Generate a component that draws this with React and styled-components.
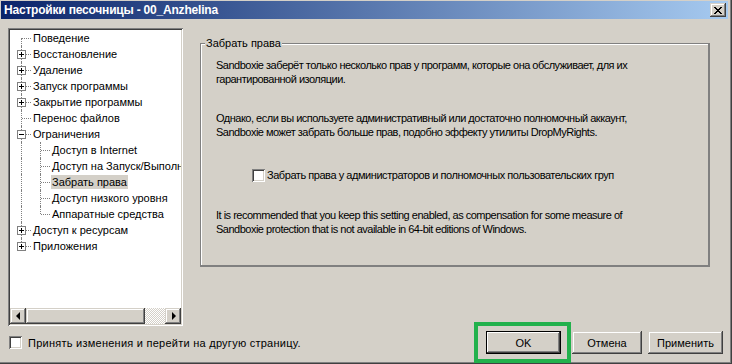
import React from 'react'
import styled, { createGlobalStyle } from 'styled-components'

const FONT = `"Liberation Sans", Arial, sans-serif`

const GlobalStyle = createGlobalStyle`
    body {
        margin: 0;
        background: #d4d0c8;
        font-family: ${FONT};
        font-size: 11px;
        color: #000;
    }
`

const raised = `
    box-shadow: inset -1px -1px #404040, inset 1px 1px #d4d0c8, inset -2px -2px #808080, inset 2px 2px #fff;
`
const sunken = `
    box-shadow: inset 1px 1px #808080, inset -1px -1px #fff, inset 2px 2px #404040, inset -2px -2px #d4d0c8;
`

const Window = styled.div`
    width: 732px;
    height: 364px;
    box-sizing: border-box;
    padding: 1px 4px 3px 1px;
    background: #d4d0c8;
    box-shadow: inset -1px -1px #404040, inset -2px -2px #808080, inset 1px 1px #d4d0c8;
    display: flex;
    flex-direction: column;
`
const TitleBar = styled.div`
    height: 18px;
    flex: none;
    display: flex;
    align-items: center;
    justify-content: space-between;
    padding: 0 2px 0 3px;
    background: linear-gradient(to right, #0a246a, #a6caf0);
    color: #fff;
    font-weight: bold;
    font-size: 12px;
    letter-spacing: -0.2px;
`
const CloseButton = styled.div`
    width: 16px;
    height: 14px;
    background: #d4d0c8;
    ${raised}
    display: flex;
    align-items: center;
    justify-content: center;
`
const Body = styled.div`
    flex: 1;
    display: grid;
    grid-template-columns: 175px 1fr;
    grid-template-rows: 298px 1fr;
    column-gap: 17px;
    padding: 9px 5px 0 7px;
`
const TreePanel = styled.div`
    background: #fff;
    ${sunken}
    padding: 2px;
    display: flex;
    flex-direction: column;
    overflow: hidden;
`
const TreeList = styled.div`
    flex: 1;
    padding-left: 2px;
    overflow: hidden;
`
const Row = styled.div`
    height: 16px;
    display: flex;
    align-items: center;
    white-space: nowrap;
`
const Cell = styled.span`
    position: relative;
    width: 19px;
    height: 16px;
    flex: none;
    &::before {
        content: '';
        display: ${p => (p.$kind === 'blank' ? 'none' : 'block')};
        position: absolute;
        left: 9px;
        top: ${p => (p.$kind === 'first' ? 8 : 0)}px;
        height: ${p => (p.$kind === 'first' || p.$kind === 'last' ? 8 : 16)}px;
        border-left: 1px dotted #808080;
    }
    &::after {
        content: '';
        display: ${p => (p.$kind === 'blank' || p.$kind === 'pipe' ? 'none' : 'block')};
        position: absolute;
        left: 10px;
        top: 8px;
        width: 9px;
        border-top: 1px dotted #808080;
    }
`
const Expander = styled.svg`
    position: absolute;
    left: 5px;
    top: 4px;
    z-index: 1;
`
const Label = styled.span`
    height: 14px;
    line-height: 14px;
    padding: 0 1px;
    margin-left: 1px;
    background: ${p => (p.$selected ? '#d4d0c8' : 'transparent')};
`
const ScrollBar = styled.div`
    height: 16px;
    flex: none;
    display: flex;
`
const ScrollButton = styled.div`
    width: 16px;
    height: 16px;
    background: #d4d0c8;
    ${raised}
    display: flex;
    align-items: center;
    justify-content: center;
    &::before {
        content: '';
        border-top: 4px solid transparent;
        border-bottom: 4px solid transparent;
        ${p => (p.$dir === 'left' ? 'border-right: 4px solid #000; margin-right: 1px;' : 'border-left: 4px solid #000; margin-left: 1px;')}
    }
`
const Thumb = styled.div`
    width: 119px;
    height: 16px;
    background: #d4d0c8;
    ${raised}
`
const Track = styled.div`
    flex: 1;
    background: repeating-conic-gradient(#fff 0 25%, #d4d0c8 0 50%) 0 0 / 2px 2px;
`
const GroupBox = styled.div`
    position: relative;
    align-self: start;
    margin-top: 15px;
    width: 510px;
    height: 224px;
    box-sizing: border-box;
    box-shadow: inset 1px 1px #808080, inset -2px -2px #808080, inset 2px 2px #fff, inset -1px -1px #fff;
    padding: 15px 16px 0 16px;
`
const Legend = styled.span`
    position: absolute;
    top: -7px;
    left: 5px;
    padding: 0 1px;
    line-height: 14px;
    background: #d4d0c8;
`
const Para = styled.p`
    margin: ${p => p.$gap || 0}px 0 0 0;
    line-height: 14px;
    letter-spacing: -0.5px;
    white-space: nowrap;
`
const CheckRow = styled.label`
    display: flex;
    align-items: center;
    gap: ${p => p.$gap}px;
    margin: ${p => p.$top || 0}px 0 0 ${p => p.$left || 0}px;
    line-height: 14px;
    letter-spacing: ${p => p.$spacing || 0}px;
    white-space: nowrap;
`
const CheckBox = styled.span`
    width: 13px;
    height: 13px;
    flex: none;
    background: #fff;
    ${sunken}
`
const Footer = styled.div`
    grid-column: 1 / 3;
    display: flex;
    align-items: center;
    justify-content: space-between;
    padding: 5px 0 0 1px;
    align-self: start;
`
const Buttons = styled.div`
    display: flex;
    align-items: center;
`
const Button = styled.div`
    width: ${p => p.$w}px;
    height: 23px;
    box-sizing: border-box;
    margin-left: ${p => p.$ml || 0}px;
    display: flex;
    align-items: center;
    justify-content: center;
    background: #d4d0c8;
    ${raised}
`
const DefaultButton = styled(Button)`
    position: relative;
    box-shadow: inset 0 0 0 1px #000, inset -2px -2px #404040, inset 2px 2px #fff, inset -3px -3px #808080;
    &::after {
        content: '';
        position: absolute;
        top: -9px;
        bottom: -9px;
        left: -12px;
        right: -10px;
        border: 4px solid #22b14c;
    }
`

const Plus = ({ open }) => (
    <Expander width="9" height="9" viewBox="0 0 9 9">
        <rect x="0.5" y="0.5" width="8" height="8" fill="#fff" stroke="#808080" />
        <path d="M2 4.5h5" stroke="#000" />
        {!open && <path d="M4.5 2v5" stroke="#000" />}
    </Expander>
)

const tree = [
    { label: 'Поведение', cells: ['first'] },
    { label: 'Восстановление', cells: ['tee'], exp: '+' },
    { label: 'Удаление', cells: ['tee'], exp: '+' },
    { label: 'Запуск программы', cells: ['tee'], exp: '+' },
    { label: 'Закрытие программы', cells: ['tee'], exp: '+' },
    { label: 'Перенос файлов', cells: ['tee'] },
    { label: 'Ограничения', cells: ['tee'], exp: '-' },
    { label: 'Доступ в Internet', cells: ['pipe', 'tee'] },
    { label: 'Доступ на Запуск/Выполн', cells: ['pipe', 'tee'] },
    { label: 'Забрать права', cells: ['pipe', 'tee'], selected: true },
    { label: 'Доступ низкого уровня', cells: ['pipe', 'tee'] },
    { label: 'Аппаратные средства', cells: ['pipe', 'last'] },
    { label: 'Доступ к ресурсам', cells: ['tee'], exp: '+' },
    { label: 'Приложения', cells: ['last'], exp: '+' },
]

export default function App() {
    return (
        <>
            <GlobalStyle />
            <Window>
                <TitleBar>
                    <span>Настройки песочницы - 00_Anzhelina</span>
                    <CloseButton>
                        <svg width="8" height="7" viewBox="0 0 8 7">
                            <path d="M0 0L7 7M1 0L8 7M7 0L0 7M8 0L1 7" stroke="#000" strokeWidth="1" shapeRendering="crispEdges" />
                        </svg>
                    </CloseButton>
                </TitleBar>
                <Body>
                    <TreePanel>
                        <TreeList>
                            {tree.map(item => (
                                <Row key={item.label}>
                                    {item.cells.map((kind, i) => (
                                        <Cell key={i} $kind={kind}>
                                            {i === item.cells.length - 1 && item.exp && <Plus open={item.exp === '-'} />}
                                        </Cell>
                                    ))}
                                    <Label $selected={item.selected}>{item.label}</Label>
                                </Row>
                            ))}
                        </TreeList>
                        <ScrollBar>
                            <ScrollButton $dir="left" />
                            <Thumb />
                            <Track />
                            <ScrollButton $dir="right" />
                        </ScrollBar>
                    </TreePanel>
                    <GroupBox>
                        <Legend>Забрать права</Legend>
                        <Para>
                            Sandboxie заберёт только несколько прав у программ, которые она обслуживает, для их<br />
                            гарантированной изоляции.
                        </Para>
                        <Para $gap={25}>
                            Однако, если вы используете административный или достаточно полномочный аккаунт,<br />
                            Sandboxie может забрать больше прав, подобно эффекту утилиты DropMyRights.
                        </Para>
                        <CheckRow $gap={2} $top={29} $left={36} $spacing={-0.45}>
                            <CheckBox />
                            Забрать права у администраторов и полномочных пользовательских груп
                        </CheckRow>
                        <Para $gap={26}>
                            It is recommended that you keep this setting enabled, as compensation for some measure of<br />
                            Sandboxie protection that is not available in 64-bit editions of Windows.
                        </Para>
                    </GroupBox>
                    <Footer>
                        <CheckRow $gap={6} $spacing={0.25}>
                            <CheckBox />
                            Принять изменения и перейти на другую страницу.
                        </CheckRow>
                        <Buttons>
                            <DefaultButton $w={75}>OK</DefaultButton>
                            <Button $w={70} $ml={11}>Отмена</Button>
                            <Button $w={75} $ml={6}>Применить</Button>
                        </Buttons>
                    </Footer>
                </Body>
            </Window>
        </>
    )
}
